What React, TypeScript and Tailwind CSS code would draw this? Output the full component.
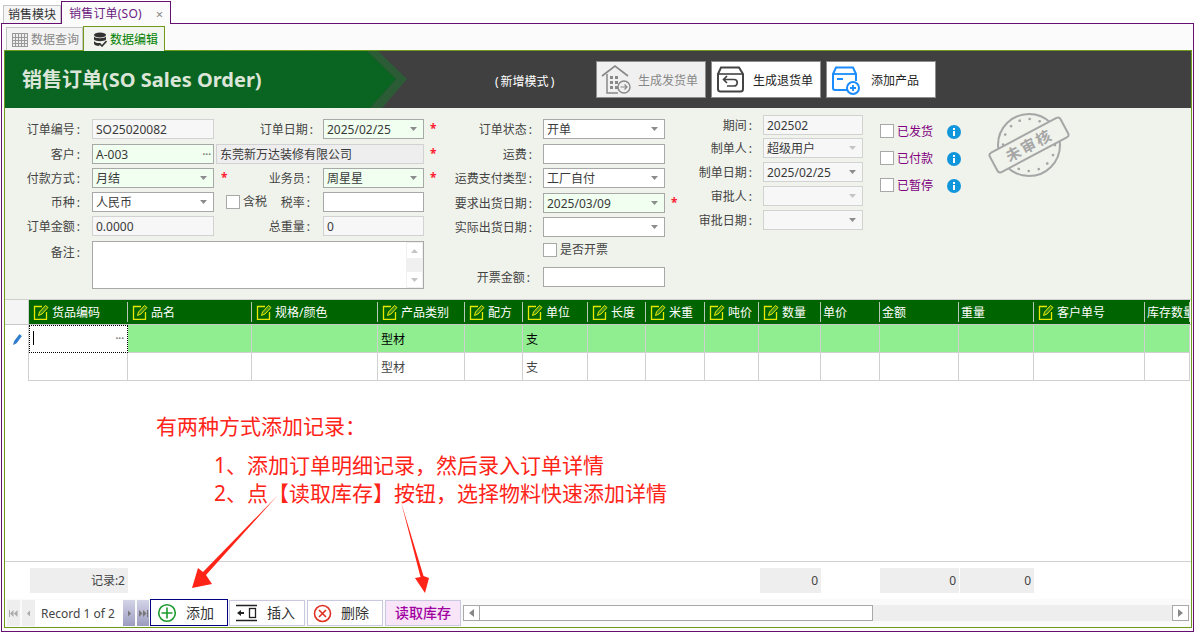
import React from "react";

const COLS = "grid grid-cols-[24px_99px_124px_126px_87px_58px_65px_58px_59px_54px_62px_59px_79px_75px_111px_45px]";

const Arrow = ({ light }: { light?: boolean }) => (
  <svg width="7" height="4" viewBox="0 0 7 4" className="absolute right-[6px] top-[7px]">
    <polygon points="0,0 7,0 3.5,4" fill={light ? "#c4c4c4" : "#8c8c8c"} />
  </svg>
);

const Star = () => <span className="text-[#ff2030] text-[12px] leading-[14px] font-bold">*</span>;

function Field({ w, value, tone = "white", arrow, dots, lightArrow, h = "h-[20px]" }: { w: string; value?: string; tone?: "white" | "mint" | "ro" | "gray"; arrow?: boolean; dots?: boolean; lightArrow?: boolean; h?: string }) {
  const tones = {
    white: "bg-white border-[#a8a8a8]",
    mint: "bg-[#f0fff0] border-[#a8a8a8]",
    ro: "bg-[#f7f7f7] border-[#d2d2d2]",
    gray: "bg-[#eeeeee] border-[#d2d2d2]",
  };
  return (
    <div className={`relative shrink-0 border ${w} ${h} ${tones[tone]} flex items-center px-[3px] pt-[2px] text-[#3a3a3a] leading-none`}>
      <span className="whitespace-nowrap">{value}</span>
      {arrow && <Arrow light={lightArrow} />}
      {dots && <span className="absolute right-[2px] top-[2px] text-[#777] text-[10px] font-bold leading-[14px]">···</span>}
    </div>
  );
}

const Label = ({ w, children }: { w: string; children: string }) => (
  <div className={`${w} shrink-0 pt-[2px] text-right text-[#444] whitespace-nowrap`}>
    {children.replace(":", "")}
    <span className="ml-[2px]">:</span>
  </div>
);

const Check = () => <div className="w-[14px] h-[14px] shrink-0 border border-[#a8a8a8] bg-white" />;

const Info = () => (
  <svg width="14" height="14" viewBox="0 0 14 14" className="shrink-0 mt-[2px]">
    <circle cx="7" cy="7" r="7" fill="#1296db" />
    <rect x="6" y="3" width="2" height="2" fill="#fff" />
    <rect x="6" y="6" width="2" height="5" fill="#fff" />
  </svg>
);

const Pen = () => (
  <svg width="16" height="16" viewBox="0 0 16 16" className="shrink-0">
    <path d="M9 2.5H1.5v13h12V8" fill="none" stroke="#e8e800" strokeWidth="1.3" />
    <path d="M5.5 11.5 L6.5 8 L12.5 1.5 L15 3.5 L9 10 Z" fill="#3b8a1c" stroke="#e8e800" strokeWidth="1" />
  </svg>
);

const heads: { t: string; pen: boolean }[] = [
  { t: "货品编码", pen: true },
  { t: "品名", pen: true },
  { t: "规格/颜色", pen: true },
  { t: "产品类别", pen: true },
  { t: "配方", pen: true },
  { t: "单位", pen: true },
  { t: "长度", pen: true },
  { t: "米重", pen: true },
  { t: "吨价", pen: true },
  { t: "数量", pen: true },
  { t: "单价", pen: false },
  { t: "金额", pen: false },
  { t: "重量", pen: false },
  { t: "客户单号", pen: true },
  { t: "库存数量", pen: false },
];

function DataRow({ active }: { active?: boolean }) {
  const cell = `border-r border-b border-[#d0d0d0] flex items-center pl-[3px] pt-[2px] ${active ? "bg-[#90ee90] text-black" : "bg-white text-[#444]"}`;
  return (
    <div className={`${COLS} h-[28px]`}>
      <div className="flex items-center pl-[8px] border-r border-[#d0d0d0] bg-white">
        {active && (
          <svg width="9" height="11" viewBox="0 0 9 11">
            <path d="M0.5 10.5 L1.5 7 L6.5 0.5 L8.5 2 L3.5 9 Z" fill="#2a7fd6" stroke="#1c5fa8" strokeWidth="0.5" />
          </svg>
        )}
      </div>
      {heads.map((h, i) => {
        if (i === 0 && active)
          return (
            <div key={i} className="relative bg-white border border-dotted border-black flex items-center pl-[3px]">
              <div className="w-[1px] h-[14px] bg-black -mt-[3px]" />
              <span className="absolute right-[3px] top-[5px] text-[#777] text-[10px] font-bold leading-[14px]">···</span>
            </div>
          );
        return (
          <div key={i} className={cell}>
            {h.t === "产品类别" ? "型材" : h.t === "单位" ? "支" : ""}
          </div>
        );
      })}
    </div>
  );
}

const Blank = () => <div />;

const SumBox = ({ children, ml = "ml-[1px]" }: { children?: React.ReactNode; ml?: string }) => (
  <div className={`${ml} h-[25px] mt-[6px] bg-[#eeeeee] flex items-center justify-end pr-[3px] pt-[1px] text-[#444]`}>{children}</div>
);

const NavBtn = ({ dir, dark, double }: { dir: "l" | "r"; dark?: boolean; double?: boolean }) => (
  <div className={`${dark ? "w-[12px] bg-gradient-to-b from-[#d4d4e8] to-[#9c9cc0]" : "w-[13px] bg-[#eeeeee]"} h-[26px] mt-[1px] shrink-0 flex items-center justify-center`}>
    <svg width="9" height="7" viewBox="0 0 9 7">
      {dir === "l" ? (
        <>
          {double && <rect x="0" y="0" width="1" height="7" fill="#aaa" />}
          <polygon points={double ? "1,3.5 4.5,0 4.5,7" : "3,3.5 6,0.5 6,6.5"} fill="#aaa" />
          {double && <polygon points="5,3.5 8.5,0 8.5,7" fill="#aaa" />}
        </>
      ) : (
        <>
          <polygon points={double ? "0,0 3.5,3.5 0,7" : "3,0.5 6,3.5 3,6.5"} fill="#777" />
          {double && <polygon points="4,0 7.5,3.5 4,7" fill="#777" />}
          {double && <rect x="8" y="0" width="1" height="7" fill="#777" />}
        </>
      )}
    </svg>
  </div>
);

const ScrollBtn = ({ dir }: { dir: "l" | "r" }) => (
  <div className="w-[17px] h-full shrink-0 bg-white border border-[#a8a8a8] flex items-center justify-center">
    <svg width="5" height="8" viewBox="0 0 5 8">
      <polygon points={dir === "l" ? "5,0 0,4 5,8" : "0,0 5,4 0,8"} fill="#888" />
    </svg>
  </div>
);

const TopBtn = ({ disabled, label, icon, gap }: { disabled?: boolean; label: string; icon: React.ReactNode; gap: string }) => (
  <div className={`w-[110px] h-[37px] shrink-0 border border-[#8e8e8e] flex items-center pl-[4px] ${disabled ? "bg-[#f0f0f0] text-[#888]" : "bg-white text-[#222]"}`}>
    <div className="w-[30px] h-[30px] shrink-0">{icon}</div>
    <span className={`${gap} pt-[3px] whitespace-nowrap`}>{label}</span>
  </div>
);

export default function App() {
  return (
    <div className="relative w-[1196px] h-[633px] overflow-hidden bg-white text-[12px] leading-[16px] font-['Noto_Sans','Noto_Sans_CJK_SC',sans-serif]">
      {/* module tabs */}
      <div className="relative z-10 h-[24px] flex items-end pl-[3px]">
        <div className="w-[58px] h-[18px] mb-[1px] pt-[1px] border border-b-0 border-[#c4c4c4] bg-[#f6f6f6] flex items-center justify-center text-[#333]">销售模块</div>
        <div className="w-[110px] h-[23px] pt-[2px] border border-b-0 border-[#660f70] bg-[#fbfbfb] flex items-center pl-[7px] text-[#6a1a80]">
          <span className="tracking-[0.2px]">销售订单(SO)</span>
          <span className="ml-[14px] text-[#888] text-[13px]">×</span>
        </div>
      </div>

      {/* main frame */}
      <div className="-mt-[1px] ml-[1px] w-[1193px] h-[609px] border border-[#660f70] bg-[#fbfbfb] flex flex-col pl-[2px] pr-[1px] pb-[3px]">
        <div className="relative z-10 h-[27px] -mb-[1px] flex items-end pl-[2px] shrink-0">
          <div className="w-[77px] h-[23px] mb-[1px] pt-[1px] border border-b-0 border-[#c4c4c4] bg-[#f4f4f4] flex items-center pl-[5px] text-[#888]">
            <svg width="16" height="14" viewBox="0 0 16 14" className="shrink-0 mr-[3px]">
              <rect x="0.5" y="0.5" width="15" height="13" fill="#eee" stroke="#999" />
              <path d="M0 4.5H16M0 7.5H16M0 10.5H16M3.5 0V14M6.5 0V14M9.5 0V14M12.5 0V14" stroke="#999" strokeWidth="1" />
            </svg>
            数据查询
          </div>
          <div className="w-[82px] h-[25px] pt-[1px] border border-b-0 border-[#6f9a1c] bg-[#f2f5ee] flex items-center pl-[9px] text-[#008000]">
            <svg width="14" height="15" viewBox="0 0 14 15" className="shrink-0 mr-[3px]">
              <ellipse cx="7" cy="3" rx="6" ry="2.6" fill="#333" />
              <path d="M1 4.5C2 6.8 12 6.8 13 4.5V7.5C12 9.8 2 9.8 1 7.5Z" fill="#333" />
              <path d="M1 9C2 11 6 11.3 8 11L6 14C4 14 1.5 13.3 1 12Z" fill="#333" />
              <path d="M7 12L9 14L13.5 9" fill="none" stroke="#333" strokeWidth="1.6" />
            </svg>
            数据编辑
          </div>
        </div>

        <div className="flex-1 min-h-0 border border-[#6f9a1c] flex flex-col bg-white">
          {/* banner */}
          <div className="relative h-[57px] shrink-0 bg-[#404040] flex items-center">
            <svg width="404" height="57" viewBox="0 0 404 57" className="absolute left-0 top-0">
              <filter id="grain">
                <feTurbulence type="fractalNoise" baseFrequency="0.9" numOctaves="2" seed="4" />
                <feColorMatrix values="0 0 0 0 0  0 0 0 0 0.1  0 0 0 0 0  0 0 0 0.55 -0.12" />
              </filter>
              <clipPath id="gclip">
                <polygon points="0,0 362,0 391,28 365,57 0,57" />
              </clipPath>
              <polygon points="362,0 373,0 402,28 377,57 365,57 391,28" fill="#2c5c36" />
              <polygon points="0,0 362,0 391,28 365,57 0,57" fill="#0b6624" />
              <rect width="404" height="57" filter="url(#grain)" opacity="0.35" clipPath="url(#gclip)" />
            </svg>
            <div className="relative pl-[17px] w-[490px] shrink-0 text-[20px] leading-[28px] font-bold text-[#dbe6d8] whitespace-nowrap">销售订单(SO Sales Order)</div>
            <div className="relative w-[101px] shrink-0 pt-[4px] text-white whitespace-nowrap">
              (<span className="mx-[2px]">新增模式</span>)
            </div>
            <div className="relative flex gap-[5px]">
              <TopBtn disabled label="生成发货单" gap="ml-[7px]" icon={
                <svg width="30" height="30" viewBox="0 0 30 30">
                  <path d="M1 11L14 1L27 11" fill="none" stroke="#888" strokeWidth="1.6" />
                  <path d="M6 9V28H17" fill="none" stroke="#888" strokeWidth="1.5" />
                  <path d="M9 11h3v3h-3zM14 11h3v3h-3zM9 16h3v3h-3zM14 16h3v3h-3zM9 21h3v3h-3zM14 21h3v3h-3z" fill="#888" />
                  <circle cx="23" cy="22" r="6" fill="#f0f0f0" stroke="#888" strokeWidth="1.4" />
                  <path d="M19.5 22H26M23.5 19.5L26 22L23.5 24.5" fill="none" stroke="#888" strokeWidth="1.2" />
                </svg>
              } />
              <TopBtn label="生成退货单" gap="ml-[7px]" icon={
                <svg width="30" height="30" viewBox="0 0 30 30">
                  <path d="M5 2.5H23L27 9V24a2.5 2.5 0 0 1-2.5 2.5H4.5A2.5 2.5 0 0 1 2 24V9Z" fill="none" stroke="#444" strokeWidth="2" />
                  <path d="M2 9H27" stroke="#444" strokeWidth="1.6" />
                  <path d="M11 11L7.5 14.5L11 18M8 14.5H18a3 3 0 0 1 0 6.5H11" fill="none" stroke="#444" strokeWidth="1.7" />
                </svg>
              } />
              <TopBtn label="添加产品" gap="ml-[10px]" icon={
                <svg width="30" height="30" viewBox="0 0 30 30">
                  <path d="M16 25H4a2 2 0 0 1-2-2V9L5 2.5H22L25 9V16" fill="none" stroke="#1a8cff" strokeWidth="2" />
                  <path d="M2 9H25" stroke="#1a8cff" strokeWidth="1.8" />
                  <rect x="6" y="13" width="6" height="2" fill="#1a8cff" />
                  <circle cx="22" cy="23" r="6" fill="#fff" stroke="#1a8cff" strokeWidth="2" />
                  <path d="M22 20V26M19 23H25" stroke="#1a8cff" strokeWidth="1.8" />
                </svg>
              } />
            </div>
          </div>

          {/* form */}
          <div className="h-[191px] shrink-0 bg-[#f0f3ec] flex">
            <div className="w-[435px] shrink-0 pt-[11px] flex flex-col">
              <div className="flex items-center h-[20px] mb-[5px]">
                <Label w="w-[75px]">订单编号:</Label>
                <div className="ml-[12px]"><Field w="w-[122px]" tone="ro" value="SO25020082" /></div>
                <Label w="w-[99px]">订单日期:</Label>
                <div className="ml-[10px]"><Field w="w-[101px]" tone="mint" value="2025/02/25" arrow /></div>
                <div className="ml-[6px]"><Star /></div>
              </div>
              <div className="flex items-center h-[20px] mb-[4px]">
                <Label w="w-[75px]">客户:</Label>
                <div className="ml-[12px]"><Field w="w-[122px]" tone="mint" value="A-003" dots /></div>
                <div className="ml-[2px]"><Field w="w-[208px]" tone="gray" value="东莞新万达装修有限公司" /></div>
                <div className="ml-[6px]"><Star /></div>
              </div>
              <div className="flex items-center h-[20px] mb-[4px]">
                <Label w="w-[75px]">付款方式:</Label>
                <div className="ml-[12px]"><Field w="w-[122px]" tone="mint" value="月结" arrow /></div>
                <div className="ml-[7px] w-[5px]"><Star /></div>
                <Label w="w-[84px]">业务员:</Label>
                <div className="ml-[13px]"><Field w="w-[101px]" tone="mint" value="周星星" arrow /></div>
                <div className="ml-[6px]"><Star /></div>
              </div>
              <div className="flex items-center h-[20px] mb-[4px]">
                <Label w="w-[75px]">币种:</Label>
                <div className="ml-[12px]"><Field w="w-[122px]" value="人民币" arrow /></div>
                <div className="ml-[12px] flex items-center gap-[3px] w-[40px] text-[#444]"><Check /><span className="whitespace-nowrap">含税</span></div>
                <Label w="w-[44px]">税率:</Label>
                <div className="ml-[13px]"><Field w="w-[101px]" /></div>
              </div>
              <div className="flex items-center h-[20px] mb-[5px]">
                <Label w="w-[75px]">订单金额:</Label>
                <div className="ml-[12px]"><Field w="w-[122px]" tone="ro" value="0.0000" /></div>
                <Label w="w-[96px]">总重量:</Label>
                <div className="ml-[13px]"><Field w="w-[101px]" tone="ro" value="0" /></div>
              </div>
              <div className="flex items-start">
                <div className="mt-[2px]"><Label w="w-[75px]">备注:</Label></div>
                <div className="ml-[12px] w-[332px] h-[48px] border border-[#a8a8a8] bg-white flex justify-end">
                  <div className="w-[17px] bg-[#f0f0f0] flex flex-col justify-between items-center py-[1px]">
                    <div className="w-[15px] h-[15px] bg-white flex items-center justify-center">
                      <svg width="7" height="4" viewBox="0 0 7 4"><polygon points="0,4 7,4 3.5,0" fill="#c4c4c4" /></svg>
                    </div>
                    <div className="w-[15px] h-[15px] bg-white flex items-center justify-center">
                      <svg width="7" height="4" viewBox="0 0 7 4"><polygon points="0,0 7,0 3.5,4" fill="#c4c4c4" /></svg>
                    </div>
                  </div>
                </div>
              </div>
            </div>

            <div className="w-[240px] shrink-0 pt-[11px] flex flex-col">
              <div className="flex items-center h-[20px] mb-[5px]"><Label w="w-[92px]">订单状态:</Label><div className="ml-[11px]"><Field w="w-[122px]" value="开单" arrow /></div></div>
              <div className="flex items-center h-[20px] mb-[4px]"><Label w="w-[92px]">运费:</Label><div className="ml-[11px]"><Field w="w-[122px]" /></div></div>
              <div className="flex items-center h-[20px] mb-[5px]"><Label w="w-[92px]">运费支付类型:</Label><div className="ml-[11px]"><Field w="w-[122px]" value="工厂自付" arrow /></div></div>
              <div className="flex items-center h-[20px] mb-[4px]"><Label w="w-[92px]">要求出货日期:</Label><div className="ml-[11px]"><Field w="w-[122px]" tone="mint" value="2025/03/09" arrow /></div><div className="ml-[6px]"><Star /></div></div>
              <div className="flex items-center h-[20px] mb-[6px]"><Label w="w-[92px]">实际出货日期:</Label><div className="ml-[11px]"><Field w="w-[122px]" arrow /></div></div>
              <div className="flex items-center h-[14px] mb-[10px] pl-[103px] gap-[3px] text-[#444]"><Check /><span>是否开票</span></div>
              <div className="flex items-center h-[20px]"><Label w="w-[90px]">开票金额:</Label><div className="ml-[13px]"><Field w="w-[122px]" /></div></div>
            </div>

            <div className="w-[200px] shrink-0 pt-[7px] flex flex-col">
              <div className="flex items-center h-[20px] mb-[3px]"><Label w="w-[72px]">期间:</Label><div className="ml-[11px]"><Field w="w-[100px]" tone="ro" value="202502" /></div></div>
              <div className="flex items-center h-[20px] mb-[4px]"><Label w="w-[72px]">制单人:</Label><div className="ml-[11px]"><Field w="w-[100px]" tone="ro" value="超级用户" arrow lightArrow /></div></div>
              <div className="flex items-center h-[20px] mb-[4px]"><Label w="w-[72px]">制单日期:</Label><div className="ml-[11px]"><Field w="w-[100px]" tone="ro" value="2025/02/25" arrow /></div></div>
              <div className="flex items-center h-[20px] mb-[4px]"><Label w="w-[72px]">审批人:</Label><div className="ml-[11px]"><Field w="w-[100px]" tone="ro" arrow lightArrow /></div></div>
              <div className="flex items-center h-[20px]"><Label w="w-[72px]">审批日期:</Label><div className="ml-[11px]"><Field w="w-[100px]" tone="ro" arrow /></div></div>
            </div>

            <div className="w-[81px] shrink-0 pt-[16px] flex flex-col gap-[13px]">
              {["已发货", "已付款", "已暂停"].map((t) => (
                <div key={t} className="flex items-center h-[14px]">
                  <Check />
                  <span className="ml-[3px] w-[50px] pt-[1px] text-[#800080]">{t}</span>
                  <Info />
                </div>
              ))}
            </div>

            <div className="ml-[27px] mt-[2px]">
              <svg width="84" height="68" viewBox="0 0 84 68">
                <g fill="none" stroke="#a6a6a6">
                  <circle cx="41" cy="35" r="31" strokeWidth="2" />
                  <circle cx="41" cy="35" r="26" strokeWidth="2.6" strokeLinecap="round" strokeDasharray="0.1 10.1" />
                </g>
                <g transform="rotate(-28 41 35)">
                  <rect x="1" y="24" width="80" height="22" rx="3" fill="#f0f3ec" stroke="#a6a6a6" strokeWidth="2" />
                  <text x="41" y="41" textAnchor="middle" fontSize="15" fontWeight="700" fill="#a6a6a6" letterSpacing="2">未审核</text>
                </g>
              </svg>
            </div>
          </div>

          {/* grid */}
          <div className="border-t border-[#d0d0d0] shrink-0">
            <div className={`${COLS} h-[25px] border-b border-[#c8c8c8]`}>
              <div className="bg-[#f5f5f5] border-r border-[#d0d0d0]" />
              {heads.map((h) => (
                <div key={h.t} className="bg-[#006400] py-[2px] overflow-hidden">
                  <div className={`h-full border-r border-[#b8c8b8] flex items-center text-white whitespace-nowrap overflow-hidden ${h.pen ? "pl-[4px] gap-[3px]" : "pl-[2px]"}`}>
                    {h.pen && <Pen />}
                    <span className="pt-[2px]">{h.t}</span>
                  </div>
                </div>
              ))}
            </div>
            <DataRow active />
            <DataRow />
          </div>

          {/* note */}
          <div className="flex-1 min-h-0 pl-[151px] pt-[31px] text-[21px] leading-[28px] text-[#ff2418]">
            <div>有两种方式添加记录：</div>
            <div className="mt-[11px] ml-[58px]">1、添加订单明细记录，然后录入订单详情</div>
            <div className="ml-[58px]">2、点【读取库存】按钮，选择物料快速添加详情</div>
          </div>

          {/* summary */}
          <div className={`${COLS} h-[38px] shrink-0 border-t border-[#d0d0d0]`}>
            <Blank />
            <SumBox>记录:2</SumBox>
            <Blank /><Blank /><Blank /><Blank /><Blank /><Blank /><Blank /><Blank />
            <SumBox>0</SumBox>
            <Blank />
            <SumBox ml="ml-0">0</SumBox>
            <SumBox>0</SumBox>
          </div>

          {/* navigator */}
          <div className="h-[28px] shrink-0 bg-[#fafafa] flex pl-[2px]">
            <NavBtn dir="l" double />
            <div className="w-[2px]" />
            <NavBtn dir="l" />
            <div className="w-[88px] h-[26px] mt-[1px] pt-[1px] bg-white flex items-center pl-[6px] text-[#444] whitespace-nowrap">Record 1 of 2</div>
            <NavBtn dir="r" dark />
            <div className="w-[2px]" />
            <NavBtn dir="r" dark double />
            <div className="w-[1px]" />
            <div className="w-[78px] h-[27px] shrink-0 border border-[#000080] bg-white flex items-center pl-[6px] text-[14px] text-[#333]">
              <svg width="20" height="20" viewBox="0 0 20 20" className="shrink-0">
                <circle cx="10" cy="10" r="8.3" fill="none" stroke="#1d9a2e" strokeWidth="1.6" />
                <path d="M10 4.5V15.5M4.5 10H15.5" stroke="#1d9a2e" strokeWidth="1.6" />
              </svg>
              <span className="ml-[9px]">添加</span>
            </div>
            <div className="ml-[1px] w-[76px] h-[26px] mt-[1px] shrink-0 border border-[#c8c8e0] bg-white flex items-center pl-[6px] text-[14px] text-[#333]">
              <svg width="21" height="20" viewBox="0 0 21 20" className="shrink-0">
                <path d="M0 2.5H21M0 17.5H21" stroke="#222" strokeWidth="1.4" />
                <path d="M1 10L5 7V9H8V11H5V13Z" fill="#222" />
                <rect x="13.5" y="5.5" width="6" height="9" fill="none" stroke="#222" strokeWidth="1.3" />
              </svg>
              <span className="ml-[10px]">插入</span>
            </div>
            <div className="ml-[2px] w-[76px] h-[26px] mt-[1px] shrink-0 border border-[#c8c8e0] bg-white flex items-center pl-[5px] text-[14px] text-[#333]">
              <svg width="19" height="19" viewBox="0 0 19 19" className="shrink-0">
                <circle cx="9.5" cy="9.5" r="8" fill="none" stroke="#e03020" strokeWidth="1.6" />
                <path d="M6 6L13 13M13 6L6 13" stroke="#e03020" strokeWidth="1.6" />
              </svg>
              <span className="ml-[9px]">删除</span>
            </div>
            <div className="ml-[2px] w-[76px] h-[26px] mt-[1px] shrink-0 border border-[#c8c8e0] bg-[#f8e6f8] flex items-center justify-center text-[14px] font-medium text-[#a000a0]">读取库存</div>
            <div className="ml-[2px] w-[726px] h-[16px] mt-[6px] shrink-0 bg-[#eeeeee] flex justify-between">
              <div className="flex h-full">
                <ScrollBtn dir="l" />
                <div className="w-[393px] h-full bg-white border border-l-0 border-[#a8a8a8]" />
              </div>
              <ScrollBtn dir="r" />
            </div>
          </div>
        </div>
      </div>

      {/* annotation arrows */}
      <svg width="1196" height="633" viewBox="0 0 1196 633" className="absolute left-0 top-0 pointer-events-none z-20">
        <polygon points="278,495 206,575 212,584 192,588 198,568 203,572" fill="#ff2418" />
        <polygon points="401,502 423.5,576 429,578 425,593 415,578 420.5,577" fill="#ff2418" />
      </svg>
    </div>
  );
}
